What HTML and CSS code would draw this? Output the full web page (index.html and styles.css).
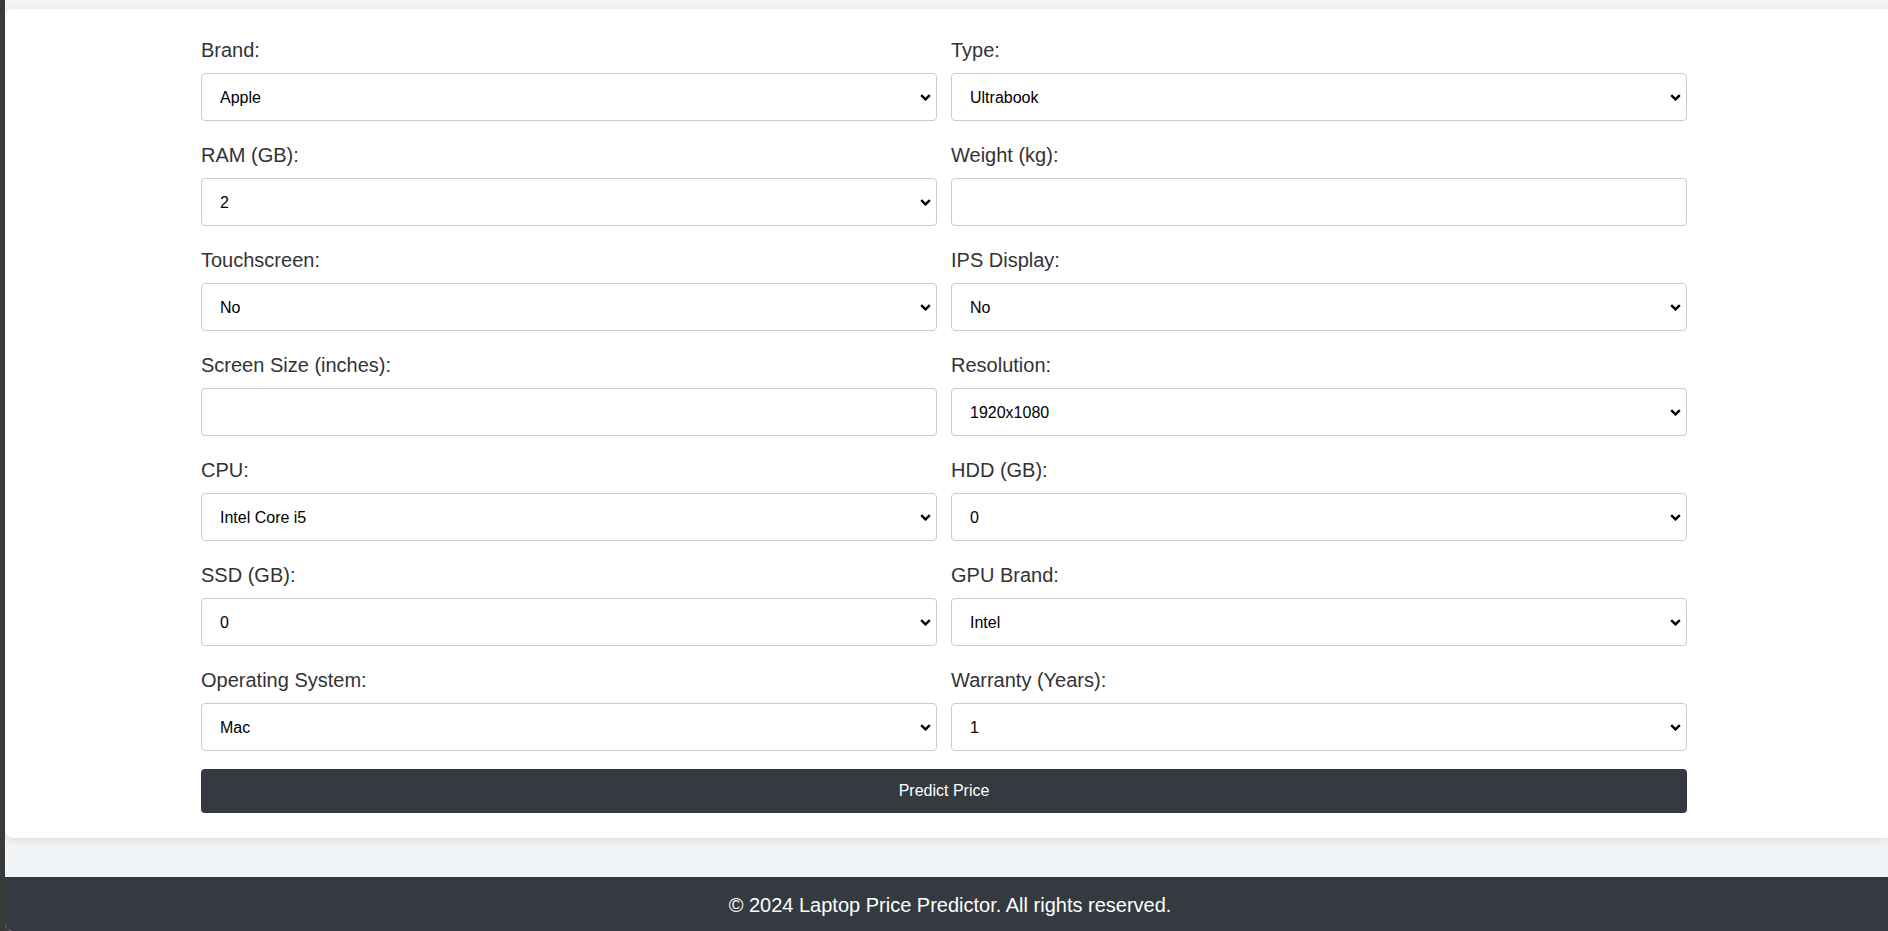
FILE: index.html
```html
<!DOCTYPE html>
<html lang="en">
<head>
<meta charset="utf-8">
<title>Laptop Price Predictor</title>
<link rel="stylesheet" href="styles.css">
</head>
<body>
<div class="window">
  <main class="card">
    <form class="predict-form">
      <div class="grid">
        <div class="group">
          <label class="label" for="brand">Brand:</label>
          <select class="field select" id="brand">
            <option>Apple</option><option>Acer</option><option>Asus</option><option>Dell</option><option>HP</option><option>Lenovo</option><option>MSI</option>
          </select>
        </div>
        <div class="group">
          <label class="label" for="type">Type:</label>
          <select class="field select" id="type">
            <option>Ultrabook</option><option>Notebook</option><option>Gaming</option><option>2 in 1 Convertible</option><option>Workstation</option><option>Netbook</option>
          </select>
        </div>
        <div class="group">
          <label class="label" for="ram">RAM (GB):</label>
          <select class="field select" id="ram">
            <option>2</option><option>4</option><option>6</option><option>8</option><option>12</option><option>16</option><option>24</option><option>32</option><option>64</option>
          </select>
        </div>
        <div class="group">
          <label class="label" for="weight">Weight (kg):</label>
          <input class="field" id="weight" type="text">
        </div>
        <div class="group">
          <label class="label" for="touch">Touchscreen:</label>
          <select class="field select" id="touch"><option>No</option><option>Yes</option></select>
        </div>
        <div class="group">
          <label class="label" for="ips">IPS Display:</label>
          <select class="field select" id="ips"><option>No</option><option>Yes</option></select>
        </div>
        <div class="group">
          <label class="label" for="screen">Screen Size (inches):</label>
          <input class="field" id="screen" type="text">
        </div>
        <div class="group">
          <label class="label" for="res">Resolution:</label>
          <select class="field select" id="res">
            <option>1920x1080</option><option>1366x768</option><option>1600x900</option><option>3840x2160</option><option>3200x1800</option><option>2880x1800</option><option>2560x1600</option><option>2560x1440</option><option>2304x1440</option>
          </select>
        </div>
        <div class="group">
          <label class="label" for="cpu">CPU:</label>
          <select class="field select" id="cpu">
            <option>Intel Core i5</option><option>Intel Core i7</option><option>Intel Core i3</option><option>Other Intel Processor</option><option>AMD Processor</option>
          </select>
        </div>
        <div class="group">
          <label class="label" for="hdd">HDD (GB):</label>
          <select class="field select" id="hdd"><option>0</option><option>128</option><option>256</option><option>512</option><option>1024</option><option>2048</option></select>
        </div>
        <div class="group">
          <label class="label" for="ssd">SSD (GB):</label>
          <select class="field select" id="ssd"><option>0</option><option>8</option><option>128</option><option>256</option><option>512</option><option>1024</option></select>
        </div>
        <div class="group">
          <label class="label" for="gpu">GPU Brand:</label>
          <select class="field select" id="gpu"><option>Intel</option><option>AMD</option><option>Nvidia</option></select>
        </div>
        <div class="group">
          <label class="label" for="os">Operating System:</label>
          <select class="field select" id="os"><option>Mac</option><option>Windows</option><option>Others/No OS/Linux</option></select>
        </div>
        <div class="group">
          <label class="label" for="warranty">Warranty (Years):</label>
          <select class="field select" id="warranty"><option>1</option><option>2</option><option>3</option></select>
        </div>
      </div>
      <button class="btn" type="button">Predict Price</button>
    </form>
  </main>
  <footer class="footer">© 2024 Laptop Price Predictor. All rights reserved.</footer>
</div>
</body>
</html>
```

FILE: styles.css
```css
* { box-sizing: border-box; }

html, body {
  margin: 0;
  padding: 0;
  height: 931px;
  overflow: hidden;
}

body {
  background: #3a3a3a;
  font-family: "Liberation Sans", Arial, sans-serif;
}

.window {
  margin-left: 5px;
  height: 931px;
  background: #f2f5f8;
  border-bottom-left-radius: 8px;
  overflow: hidden;
  display: flex;
  flex-direction: column;
  padding-top: 9px;
}

.card {
  background: #fff;
  border-top-left-radius: 8px;
  border-bottom-left-radius: 8px;
  box-shadow: 0 2px 10px rgba(0, 0, 0, 0.1);
  padding: 30px 0 25px 196px;
  margin-bottom: 39px;
}

.predict-form {
  width: 1486px;
}

.grid {
  display: grid;
  grid-template-columns: 1fr 1fr;
  column-gap: 14px;
  row-gap: 23px;
}

.group {
  display: flex;
  flex-direction: column;
}

.label {
  display: block;
  font-size: 20px;
  line-height: 23px;
  color: #333;
  margin-bottom: 11px;
}

.field {
  display: block;
  width: 100%;
  height: 48px;
  border: 1px solid #ccc;
  border-radius: 4px;
  background-color: #fff;
  font-family: "Liberation Sans", Arial, sans-serif;
  font-size: 16px;
  color: #000;
  padding: 0 14px;
  margin: 0;
  outline: none;
}

.select {
  -webkit-appearance: none;
  appearance: none;
  padding: 0 30px 0 18px;
  background-image: url("data:image/svg+xml,%3Csvg xmlns='http://www.w3.org/2000/svg' width='11' height='7' viewBox='0 0 11 7'%3E%3Cpath d='M1.2 1.2 L5.5 5.4 L9.8 1.2' fill='none' stroke='%23000' stroke-width='2.4'/%3E%3C/svg%3E");
  background-repeat: no-repeat;
  background-position: right 5px center;
  background-size: 11px 7px;
}

.btn {
  display: block;
  width: 100%;
  height: 44px;
  margin-top: 18px;
  border: 0;
  border-radius: 4px;
  background: #343a40;
  color: #fff;
  font-family: "Liberation Sans", Arial, sans-serif;
  font-size: 16px;
  cursor: pointer;
}

.footer {
  height: 54px;
  background: #343a40;
  color: #fff;
  font-size: 20px;
  display: flex;
  align-items: center;
  justify-content: center;
  padding: 2px 0 0 7px;
}
```
